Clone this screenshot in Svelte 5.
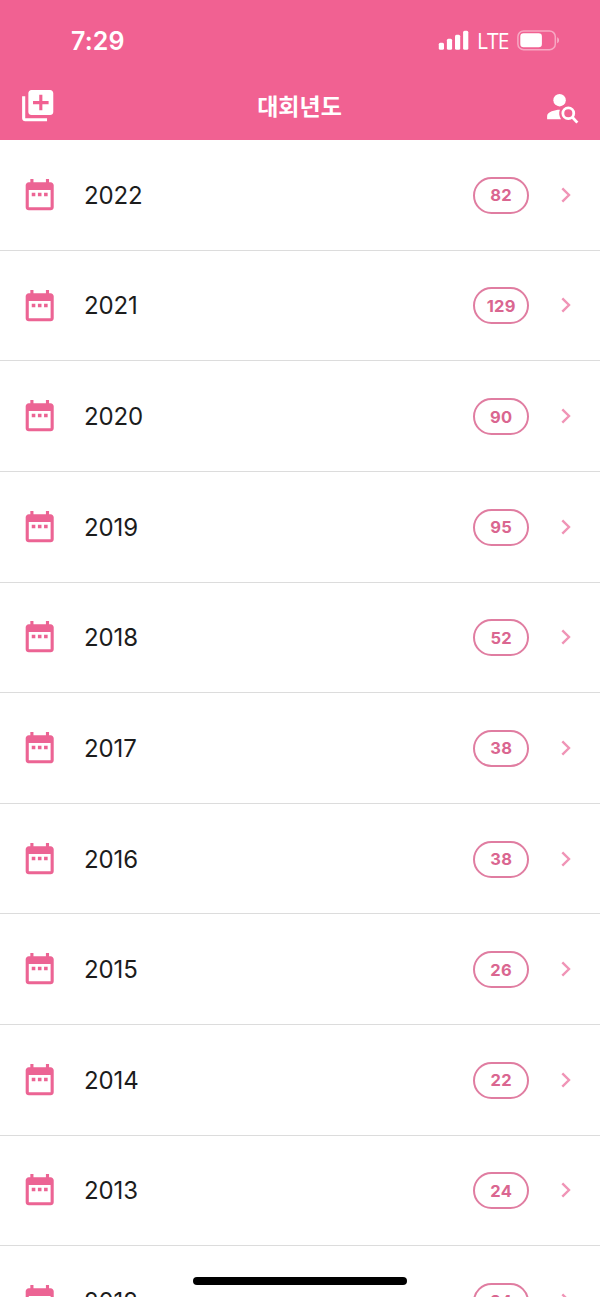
<script lang="ts">
  type YearEntry = { year: number; count: number };

  const entries: YearEntry[] = [
    { year: 2022, count: 82 },
    { year: 2021, count: 129 },
    { year: 2020, count: 90 },
    { year: 2019, count: 95 },
    { year: 2018, count: 52 },
    { year: 2017, count: 38 },
    { year: 2016, count: 38 },
    { year: 2015, count: 26 },
    { year: 2014, count: 22 },
    { year: 2013, count: 24 },
    { year: 2012, count: 24 }
  ];

  const bars = [7, 11, 15, 19];
</script>

<div class="screen">
  <header>
    <div class="status">
      <span class="time">7:29</span>
      <div class="indicators">
        <svg class="signal" viewBox="0 0 31 20">
          {#each bars as height, i}
            <rect x={i * 8.1 + 0.8} y={19.8 - height} width="5.2" {height} rx="1.5" />
          {/each}
        </svg>
        <span class="network">LTE</span>
        <svg class="battery" viewBox="0 0 43 21">
          <rect class="shell" x="0.9" y="0.9" width="37.4" height="18.8" rx="5.8" />
          <rect x="3.3" y="3.3" width="21.6" height="14" rx="3.2" />
          <path class="tip" d="M40.2 7.3c2.4.9 2.4 5.1 0 6z" />
        </svg>
      </div>
    </div>
    <nav>
      <button aria-label="add">
        <svg class="icon" viewBox="0 0 24 24">
          <path d="M4 6H2v14c0 1.1.9 2 2 2h14v-2H4V6zm16-4H8c-1.1 0-2 .9-2 2v12c0 1.1.9 2 2 2h12c1.1 0 2-.9 2-2V4c0-1.1-.9-2-2-2zm-1 9h-4v4h-2v-4H9V9h4V5h2v4h4v2z" />
        </svg>
      </button>
      <h1>대회년도</h1>
      <button aria-label="search">
        <svg class="icon person" viewBox="0 0 24 24">
          <circle cx="10" cy="7.8" r="4" />
          <path d="M10.2 14.01C7.62 13.91 2 15.27 2 18v2h8.9c-1.2-1.9-1.5-4-.7-5.99z" />
          <circle class="lens" cx="15.6" cy="16.2" r="3.5" />
          <path class="lens" d="M18.2 18.8l3.2 3.4" />
        </svg>
      </button>
    </nav>
  </header>

  <ul>
    {#each entries as { year, count }}
      <li>
        <svg class="icon" viewBox="0 0 24 24">
          <path d="M9.2 10.8H6.9v2.2h2.3v-2.2zm3.95 0h-2.3v2.2h2.3v-2.2zm3.95 0h-2.3v2.2h2.3v-2.2zM19 4h-1V2h-2v2H8V2H6v2H5c-1.11 0-1.99.9-1.99 2L3 20c0 1.1.89 2 2 2h14c1.1 0 2-.9 2-2V6c0-1.1-.9-2-2-2zm0 16H5V9h14v11z" />
        </svg>
        <span class="year">{year}</span>
        <span class="count">{count}</span>
        <svg class="chevron" viewBox="0 0 10 16">
          <path d="M1.3 1.3 8 8l-6.7 6.7" />
        </svg>
      </li>
    {/each}
  </ul>

  <div class="home-bar"></div>
</div>

<style>
  :global(body) {
    margin: 0;
    background: #fff;
  }

  .screen {
    position: relative;
    width: 600px;
    height: 1297px;
    overflow: hidden;
    background: #fff;
    font-family: Inter, "Noto Sans CJK KR", sans-serif;
  }

  header {
    height: 139.6px;
    background: #f16192;
    color: #fff;
  }

  .status {
    display: flex;
    justify-content: space-between;
    align-items: center;
    box-sizing: border-box;
    height: 81px;
    padding: 0 40px 0 71px;
  }

  .time {
    font-size: 25px;
    font-weight: 600;
    letter-spacing: 0.1px;
  }

  .indicators {
    display: flex;
    align-items: center;
  }

  .indicators svg,
  .icon {
    display: block;
    fill: currentColor;
  }

  .signal {
    width: 31px;
    height: 20px;
    margin-bottom: 1px;
  }

  .network {
    width: 31px;
    margin: 0 9px 0 8px;
    font-family: "Open Sans", sans-serif;
    font-size: 21px;
    font-weight: 500;
    letter-spacing: -0.9px;
  }

  .battery {
    width: 43px;
    height: 21px;
  }

  .battery .shell {
    fill: none;
    stroke: #fff;
    stroke-opacity: 0.45;
    stroke-width: 1.5;
  }

  .battery .tip {
    fill-opacity: 0.5;
  }

  nav {
    display: flex;
    justify-content: space-between;
    align-items: center;
    height: 50px;
    padding: 0 18.5px;
  }

  button {
    padding: 0;
    border: none;
    background: none;
    color: inherit;
  }

  h1 {
    margin: 0 1px 3px 0;
    font-family: "Noto Sans CJK KR", sans-serif;
    font-size: 23px;
    font-weight: 700;
    line-height: 30px;
  }

  .icon {
    flex: none;
    width: 37.4px;
    height: 37.4px;
  }

  .person {
    margin-top: 2px;
  }

  .lens {
    fill: none;
    stroke: currentColor;
    stroke-width: 1.8;
  }

  ul {
    margin: 0;
    padding: 0;
    list-style: none;
  }

  li {
    display: flex;
    align-items: center;
    box-sizing: border-box;
    height: 110.62px;
    padding: 1px 29px 0 21.4px;
    border-bottom: 1px solid #dcdcdc;
    color: #ec6494;
  }

  li:first-child {
    height: 111.1px;
    padding-top: 1.5px;
  }

  li .icon {
    margin-bottom: 1.5px;
  }

  .year {
    flex: 1;
    margin-left: 25.2px;
    color: #1c1c1c;
    font-size: 24px;
    letter-spacing: -0.1px;
  }

  .count {
    display: flex;
    justify-content: center;
    align-items: center;
    box-sizing: border-box;
    width: 55.6px;
    height: 37px;
    border: 2px solid #e07da1;
    border-radius: 18.5px;
    color: #da6690;
    font-size: 16.5px;
    font-weight: 700;
    letter-spacing: 0.3px;
  }

  .chevron {
    width: 10px;
    height: 16px;
    margin: 0 0 1px 32px;
    fill: none;
    stroke: #f094b6;
    stroke-width: 2.4;
  }

  .home-bar {
    position: absolute;
    left: 193px;
    bottom: 12.5px;
    width: 214px;
    height: 8px;
    border-radius: 4px;
    background: #000;
  }
</style>
